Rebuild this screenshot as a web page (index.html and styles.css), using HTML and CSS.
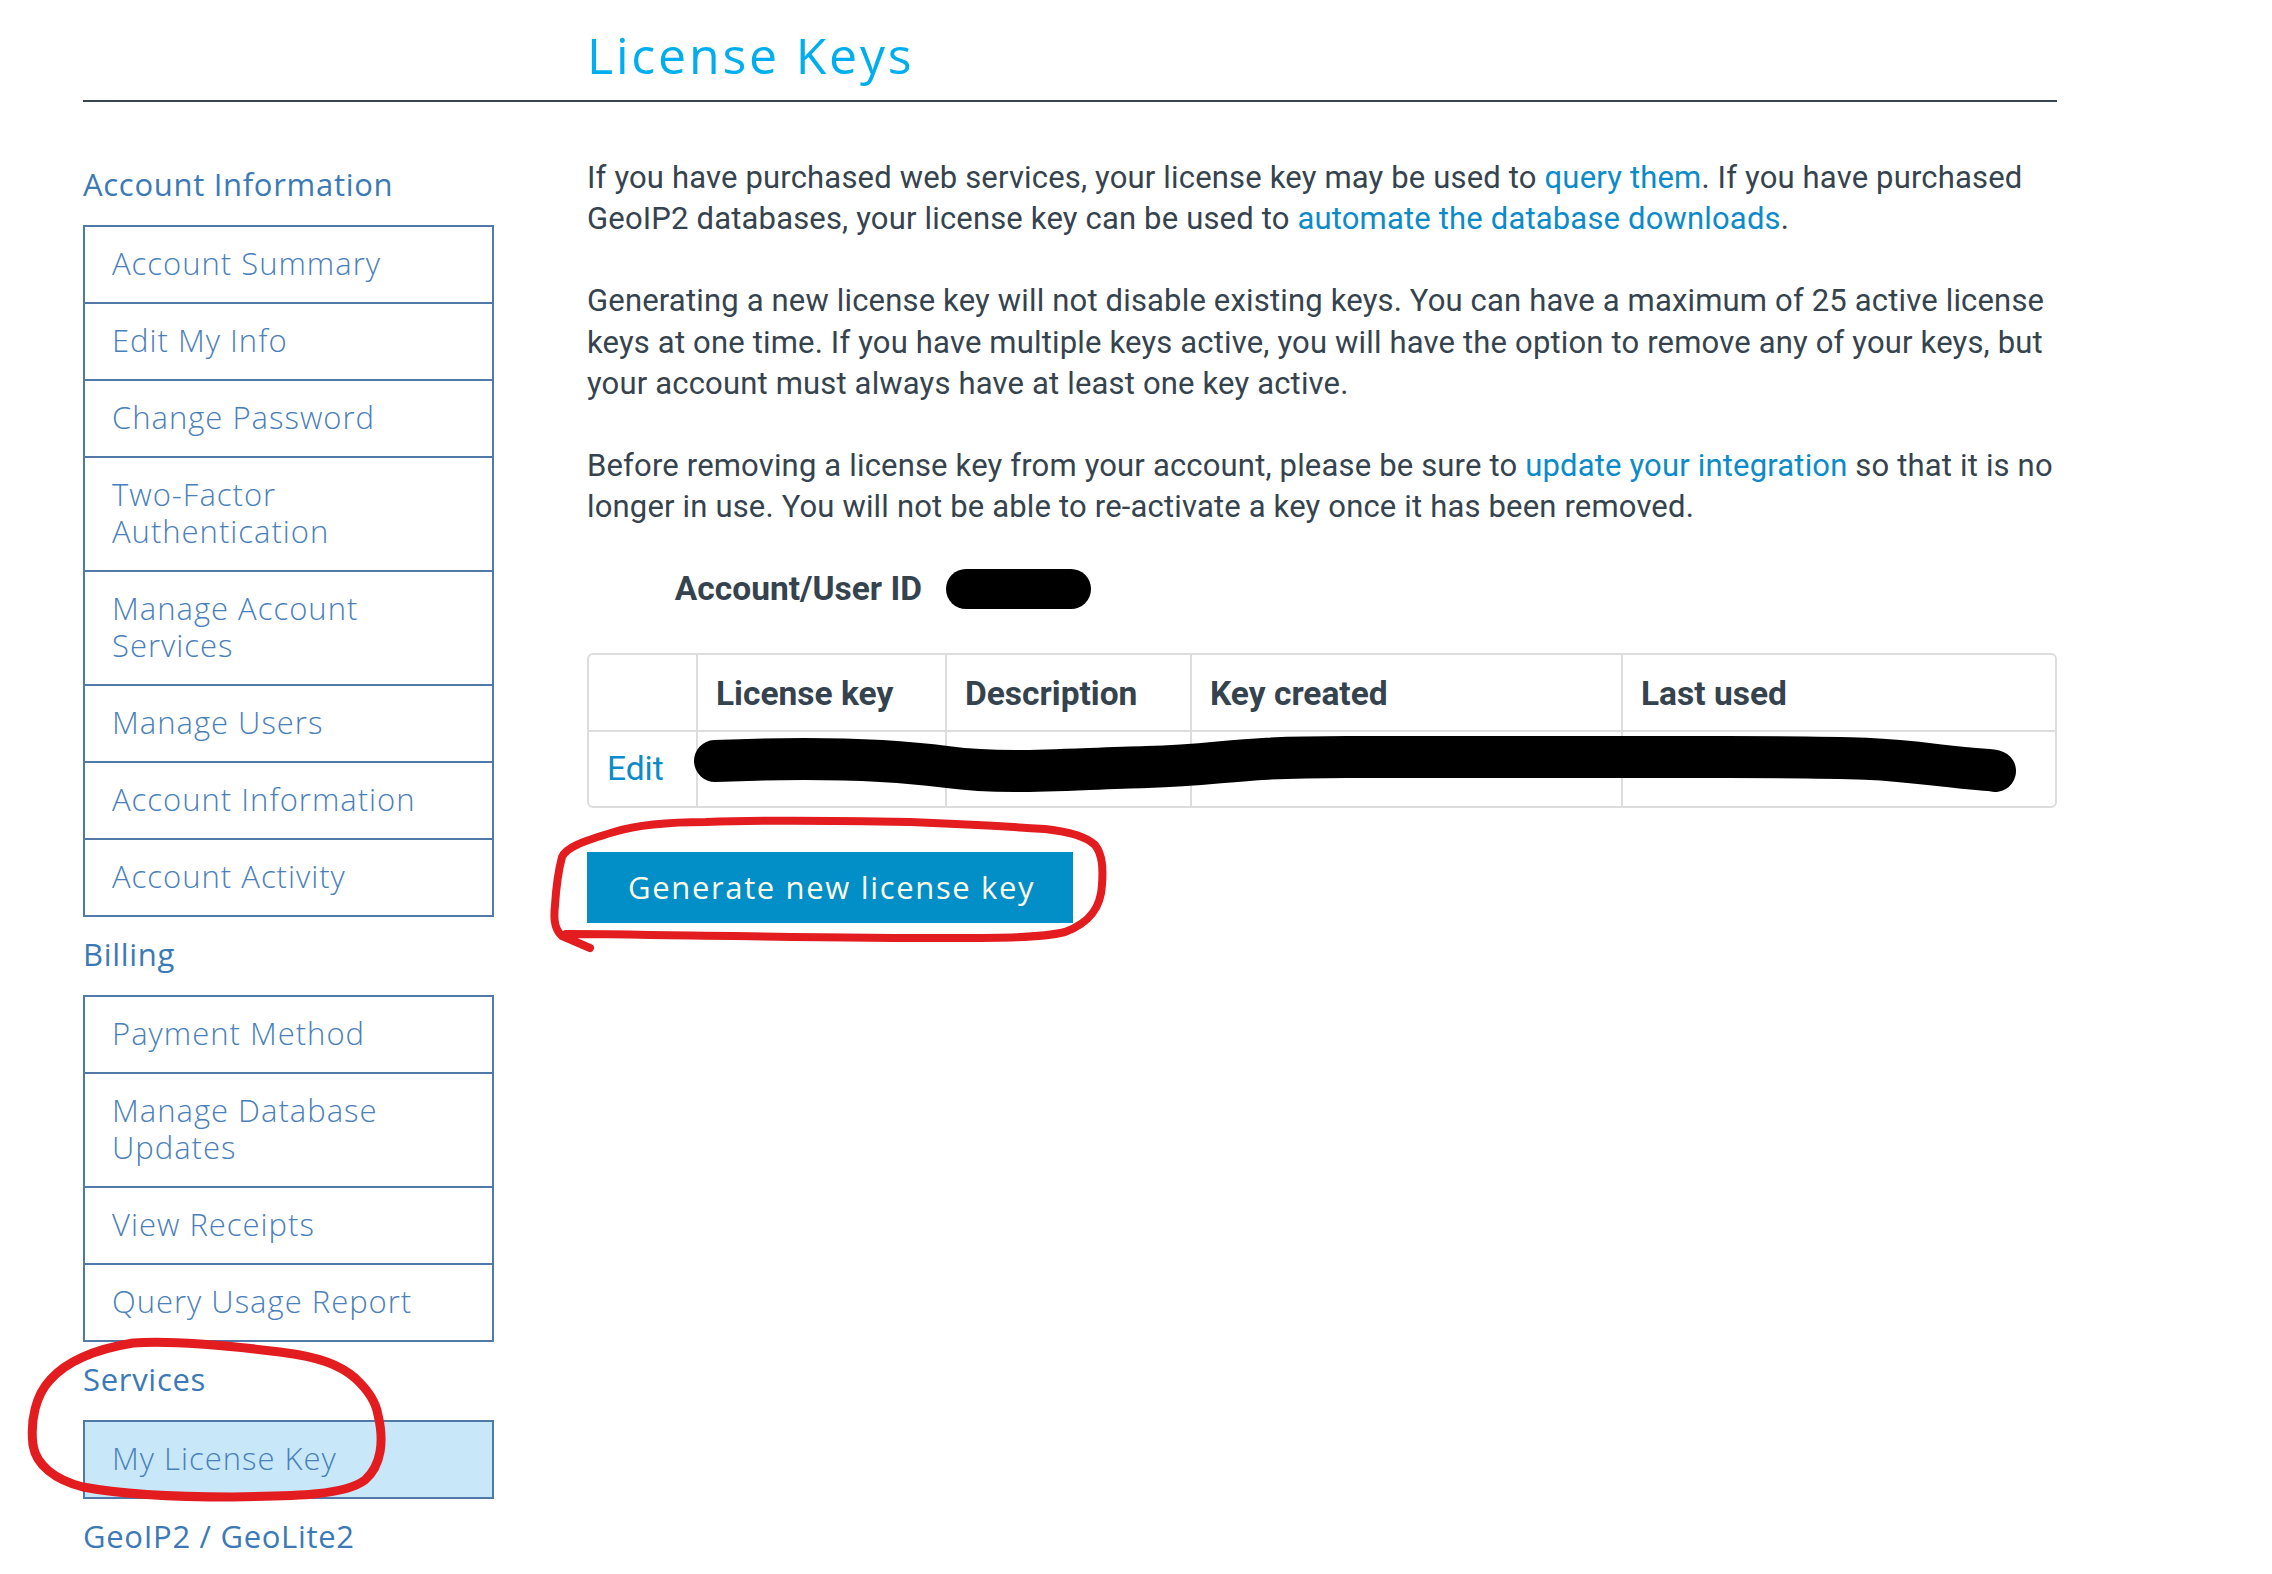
FILE: index.html
```html
<!DOCTYPE html>
<html lang="en">
<head>
<meta charset="utf-8">
<title>License Keys</title>
<link rel="stylesheet" href="styles.css">
</head>
<body>
<div class="page">
  <header class="page-head">
    <div></div>
    <h1 class="title">License Keys</h1>
  </header>
  <div class="layout">
    <aside class="sidebar">
      <h3 class="nav-head">Account Information</h3>
      <ul class="nav-box">
        <li><a href="#">Account Summary</a></li>
        <li><a href="#">Edit My Info</a></li>
        <li><a href="#">Change Password</a></li>
        <li><a href="#">Two-Factor Authentication</a></li>
        <li><a href="#">Manage Account Services</a></li>
        <li><a href="#">Manage Users</a></li>
        <li><a href="#">Account Information</a></li>
        <li><a href="#">Account Activity</a></li>
      </ul>
      <h3 class="nav-head">Billing</h3>
      <ul class="nav-box">
        <li><a href="#">Payment Method</a></li>
        <li><a href="#">Manage Database Updates</a></li>
        <li><a href="#">View Receipts</a></li>
        <li><a href="#">Query Usage Report</a></li>
      </ul>
      <h3 class="nav-head">Services</h3>
      <ul class="nav-box">
        <li class="active"><a href="#">My License Key</a></li>
      </ul>
      <h3 class="nav-head">GeoIP2 / GeoLite2</h3>
    </aside>
    <main class="content">
      <p>If you have purchased web services, your license key may be used to <a href="#">query them</a>. If you have purchased GeoIP2 databases, your license key can be used to <a href="#">automate the database downloads</a>.</p>
      <p>Generating a new license key will not disable existing keys. You can have a maximum of 25 active license keys at one time. If you have multiple keys active, you will have the option to remove any of your keys, but your account must always have at least one key active.</p>
      <p>Before removing a license key from your account, please be sure to <a href="#">update your integration</a> so that it is no longer in use. You will not be able to re-activate a key once it has been removed.</p>
      <dl class="id-row">
        <dt>Account/User ID</dt>
        <dd><span class="redact-pill"></span></dd>
      </dl>
      <div class="table-wrap">
        <table class="keys">
          <thead>
            <tr>
              <th class="c1"></th>
              <th class="c2">License key</th>
              <th class="c3">Description</th>
              <th class="c4">Key created</th>
              <th class="c5">Last used</th>
            </tr>
          </thead>
          <tbody>
            <tr>
              <td><a href="#">Edit</a></td>
              <td></td>
              <td></td>
              <td></td>
              <td></td>
            </tr>
          </tbody>
        </table>
        <svg class="scribble" width="1470" height="160" viewBox="0 0 1470 160" aria-hidden="true">
          <path d="M128 108 C 220 104, 300 106, 360 114 S 480 116, 560 114 S 640 104, 760 104 S 1000 104, 1140 104 S 1300 106, 1350 112 S 1400 116, 1408 118" fill="none" stroke="#000" stroke-width="42" stroke-linecap="round" stroke-linejoin="round"/>
        </svg>
      </div>
      <button class="btn-generate" type="button">Generate new license key</button>
    </main>
  </div>
</div>
<svg class="annotations" width="2272" height="1574" viewBox="0 0 2272 1574" aria-hidden="true">
  <path d="M590 948 L 562 936 C 553 928, 554 915, 555 905 C 556 890, 558 872, 562 857 C 566 848, 580 842, 614 832 C 640 824, 680 822, 706 822 C 760 820, 860 821, 910 822 C 960 824, 1000 826, 1045 829 C 1070 832, 1085 836, 1095 845 C 1103 855, 1103 870, 1102 885 C 1101 905, 1092 922, 1065 932 C 1040 938, 1000 938, 950 938 C 850 938, 750 936, 650 935 C 610 934, 585 934, 566 934" fill="none" stroke="#e31c1f" stroke-width="8" stroke-linecap="round" stroke-linejoin="round"/>
  <path d="M378 1415 C 384 1440, 382 1465, 365 1480 C 345 1495, 300 1496, 232 1497 C 170 1497, 120 1494, 83 1487 C 55 1480, 36 1465, 33 1445 C 30 1420, 36 1395, 50 1380 C 65 1363, 90 1350, 133 1343 C 175 1340, 232 1346, 280 1352 C 320 1357, 340 1365, 355 1378 C 368 1390, 376 1402, 378 1415" fill="none" stroke="#e31c1f" stroke-width="9" stroke-linecap="round" stroke-linejoin="round"/>
</svg>
</body>
</html>
```

FILE: styles.css
```css
* {
  box-sizing: border-box;
}

html, body {
  margin: 0;
  padding: 0;
  background: #ffffff;
}

body {
  position: relative;
  width: 2272px;
  min-height: 1574px;
  overflow: hidden;
  font-family: Roboto, "Liberation Sans", sans-serif;
  color: #35434f;
}

.page {
  margin-left: 83px;
  width: 1974px;
}

.page-head {
  display: grid;
  grid-template-columns: 411px 1470px;
  column-gap: 93px;
  height: 102px;
  border-bottom: 2px solid #37474f;
}

.title {
  margin: 0;
  padding-top: 28px;
  font-family: "Open Sans", sans-serif;
  font-weight: 400;
  font-size: 50px;
  line-height: 55px;
  letter-spacing: 2.8px;
  color: #00aeef;
}

.layout {
  display: grid;
  grid-template-columns: 411px 1470px;
  column-gap: 93px;
  padding-top: 55px;
}

/* Sidebar */
.sidebar {
  padding-top: 9px;
}

.nav-head {
  margin: 0 0 22px 0;
  font-family: "Open Sans", sans-serif;
  font-weight: 500;
  font-size: 31px;
  line-height: 37px;
  letter-spacing: 0.7px;
  color: #3b7ab6;
}

.nav-box + .nav-head {
  margin-top: 19px;
}

.nav-box {
  list-style: none;
  margin: 0;
  padding: 0;
  border: 2px solid #5079a8;
}

.nav-box li + li {
  border-top: 2px solid #5079a8;
}

.nav-box a {
  display: block;
  padding: 18px 24px 20px 27px;
  font-family: "Open Sans", sans-serif;
  font-weight: 300;
  font-size: 31px;
  line-height: 37px;
  letter-spacing: 1px;
  color: #4a80ba;
  text-decoration: none;
}

.nav-box li.active {
  background: #c8e8f9;
}

/* Content */
.content p {
  margin: 0 0 41px 0;
  font-size: 31px;
  line-height: 41.2px;
  letter-spacing: 0.17px;
}

.content a {
  color: #0b8bc8;
  text-decoration: none;
}

.id-row {
  display: flex;
  align-items: center;
  margin: 0 0 44px 0;
  height: 41px;
}

.id-row dt {
  width: 335px;
  text-align: right;
  font-weight: 700;
  font-size: 33.5px;
  line-height: 41px;
}

.id-row dd {
  margin: 0 0 0 24px;
  display: flex;
  align-items: center;
}

.redact-pill {
  display: block;
  width: 145px;
  height: 40px;
  border-radius: 20px;
  background: #000;
}

.table-wrap {
  position: relative;
  width: 1470px;
}

.keys {
  width: 1470px;
  table-layout: fixed;
  border-collapse: separate;
  border-spacing: 0;
  border: 2px solid #dddddd;
  border-radius: 6px;
  font-size: 33.5px;
  line-height: 46.5px;
}

.keys th,
.keys td {
  padding: 14px 18px;
  text-align: left;
  vertical-align: bottom;
  box-sizing: border-box;
}

.keys th {
  padding-top: 16px;
  padding-bottom: 12px;
}

.keys th + th,
.keys td + td {
  border-left: 2px solid #dddddd;
}

.keys th {
  font-weight: 700;
  color: #35434f;
  border-bottom: 2px solid #dddddd;
}

.keys td {
  height: 74.5px;
}

.keys .c1 { width: 107px; }
.keys .c2 { width: 249px; }
.keys .c3 { width: 245px; }
.keys .c4 { width: 431px; }
.keys .c5 { width: 434px; }

.scribble {
  position: absolute;
  left: 0;
  top: 0;
}

.btn-generate {
  display: block;
  margin-top: 44px;
  padding: 17px 38px 17px 41px;
  border: 0;
  border-radius: 0;
  background: #028fc7;
  color: #fffbe8;
  font-family: "Open Sans", sans-serif;
  font-weight: 400;
  font-size: 31px;
  line-height: 37px;
  letter-spacing: 1.65px;
}

.annotations {
  position: absolute;
  left: 0;
  top: 0;
  pointer-events: none;
}
```
